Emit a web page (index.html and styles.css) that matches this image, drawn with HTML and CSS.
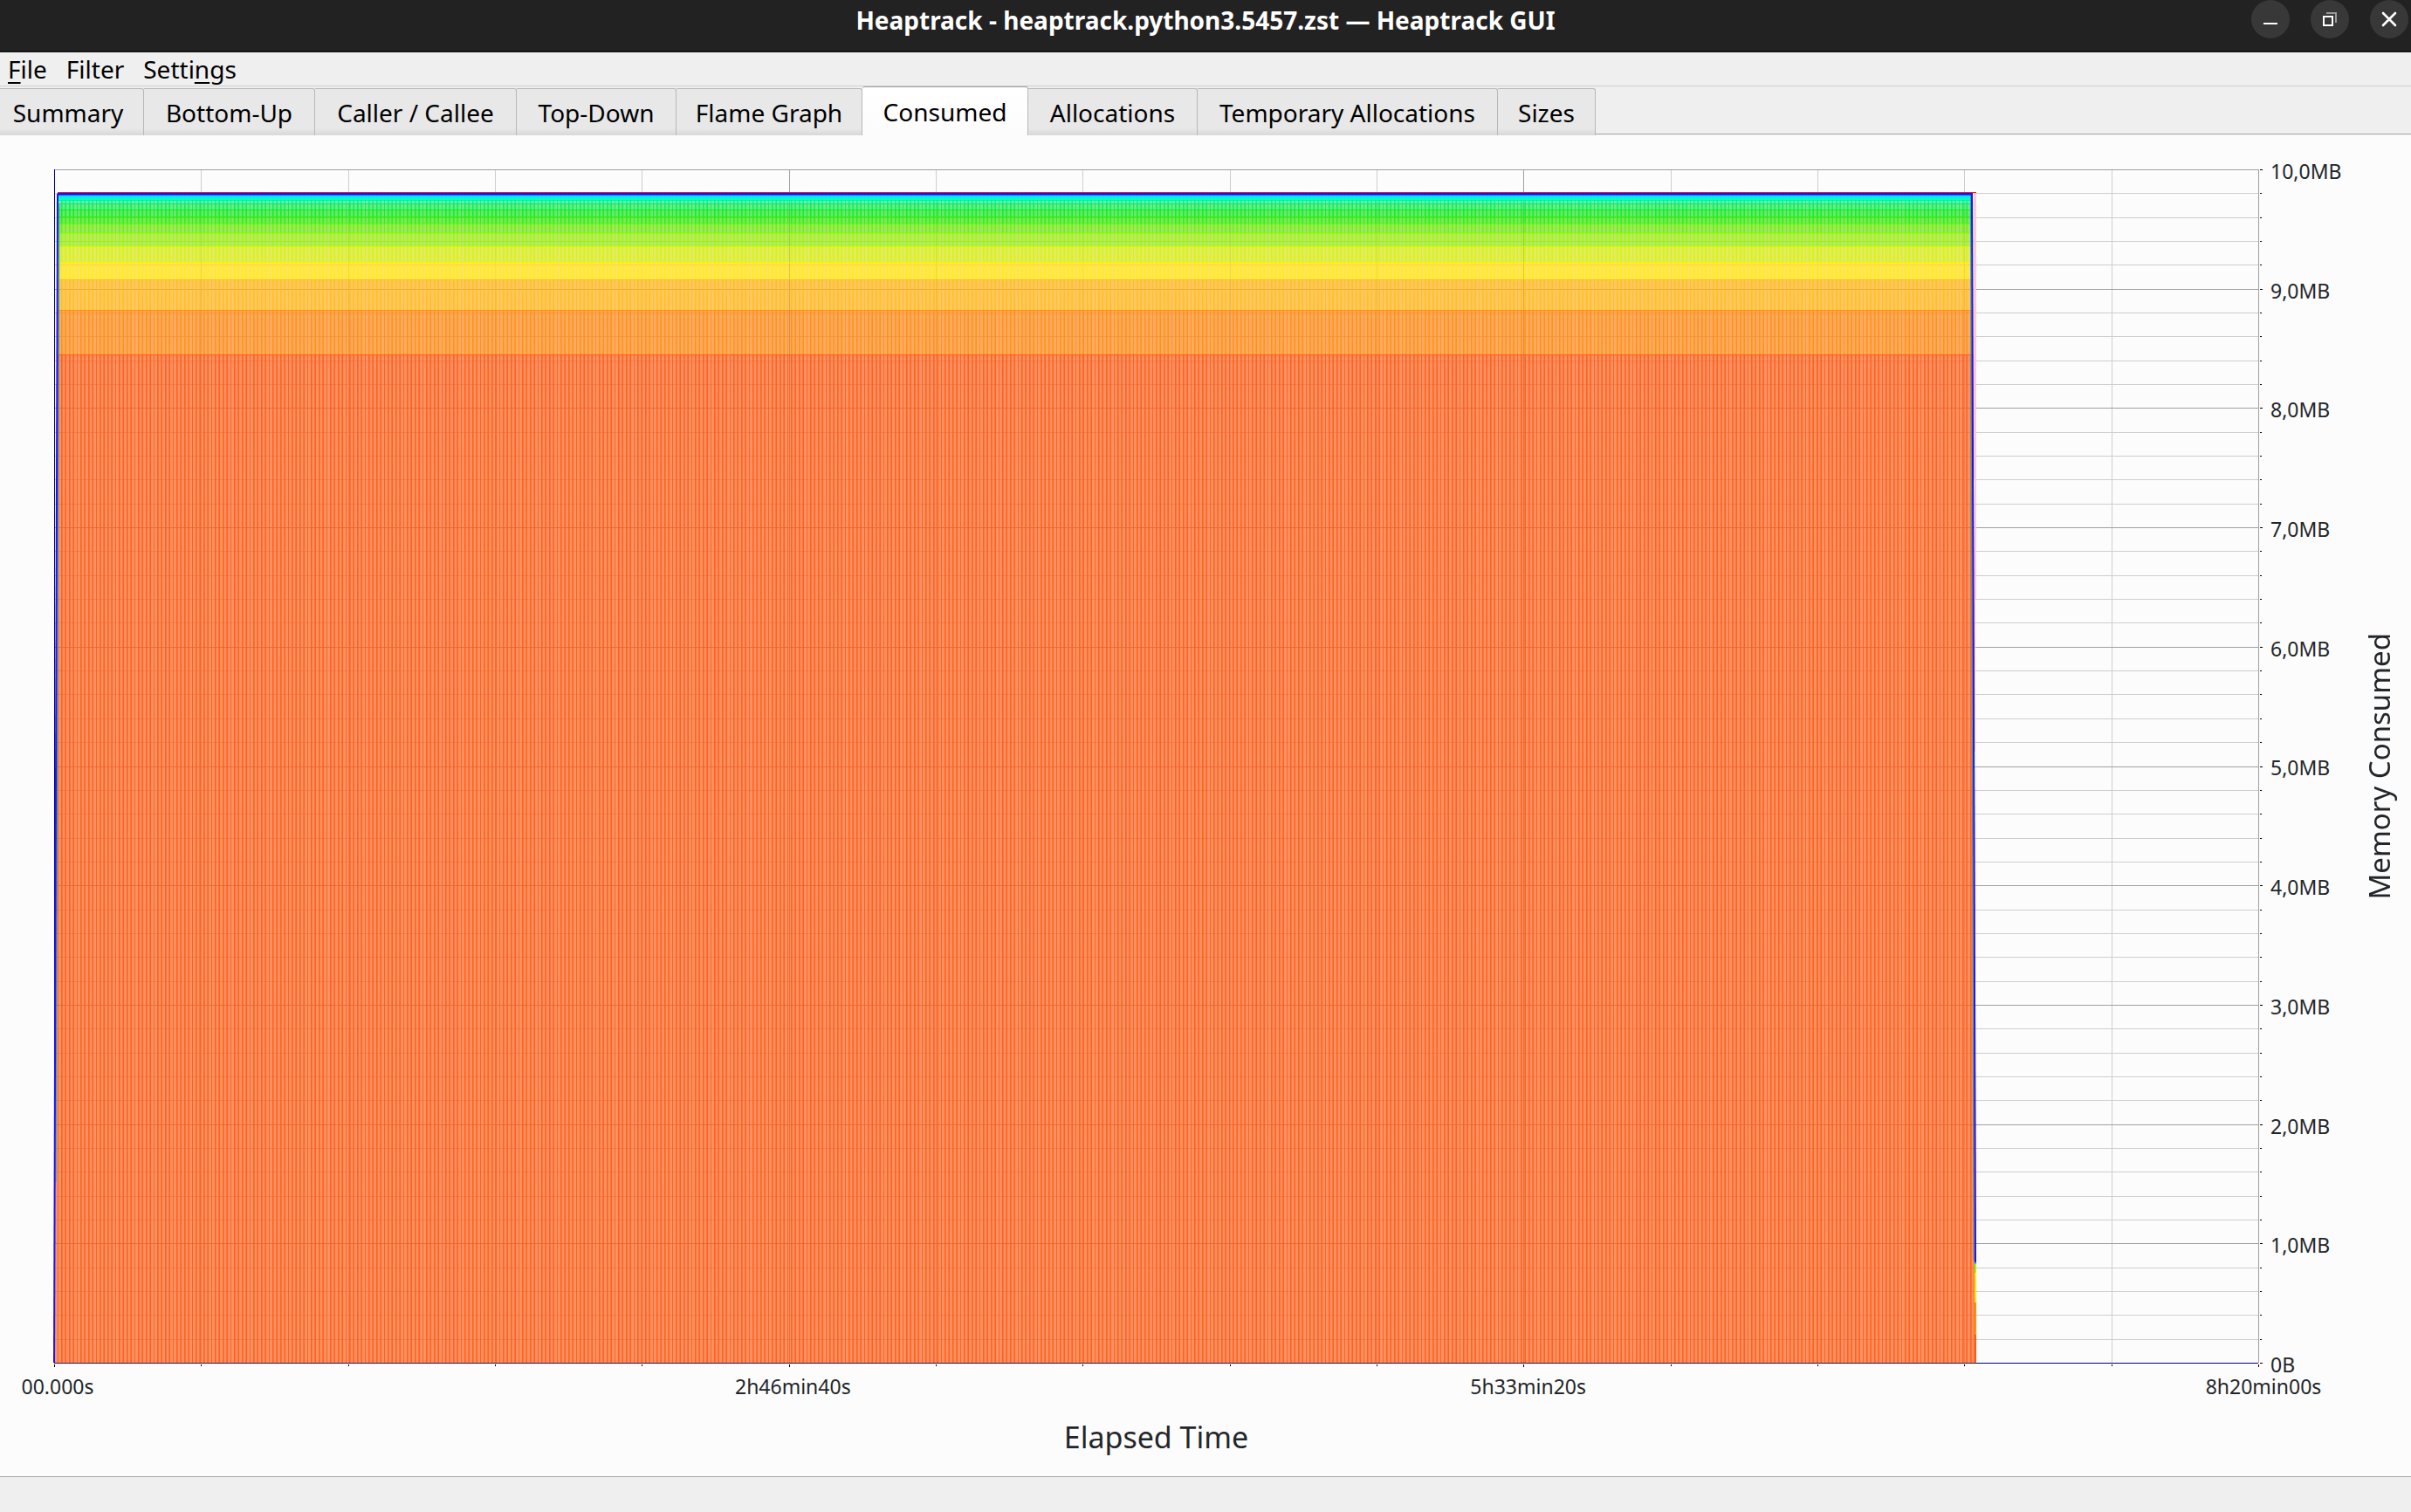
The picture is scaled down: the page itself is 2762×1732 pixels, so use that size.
FILE: index.html
```html
<!DOCTYPE html>
<html lang="en">
<head>
<meta charset="utf-8">
<title>Heaptrack - heaptrack.python3.5457.zst — Heaptrack GUI</title>
<link rel="stylesheet" href="styles.css">
</head>
<body>
<header class="titlebar">
  <h1 class="title">Heaptrack - heaptrack.python3.5457.zst — Heaptrack GUI</h1>
  <div class="window-buttons">
    <button class="window-button" type="button" aria-label="Minimize">
      <svg viewBox="0 0 44 44"><path d="M14 27h16" stroke="#fff" stroke-width="2"/></svg>
    </button>
    <button class="window-button" type="button" aria-label="Restore">
      <svg viewBox="0 0 44 44" fill="none" stroke-width="2"><path d="M18 15h11v11" stroke="#999"/><path d="M15 19h10v10h-10z" stroke="#fff"/></svg>
    </button>
    <button class="window-button" type="button" aria-label="Close">
      <svg viewBox="0 0 44 44"><path d="M15 15l14 14M29 15l-14 14" stroke="#fff" stroke-width="2.6" stroke-linecap="round"/></svg>
    </button>
  </div>
</header>
<nav class="menubar">
  <button class="menu" type="button"><u>F</u>ile</button>
  <button class="menu" type="button">Filter</button>
  <button class="menu" type="button">Setti<u>n</u>gs</button>
</nav>
<div class="tabs" role="tablist">
  <button class="tab tab-first" type="button" role="tab">Summary</button>
  <button class="tab" type="button" role="tab">Bottom-Up</button>
  <button class="tab" type="button" role="tab">Caller / Callee</button>
  <button class="tab" type="button" role="tab">Top-Down</button>
  <button class="tab" type="button" role="tab">Flame Graph</button>
  <button class="tab tab-active" type="button" role="tab" aria-selected="true">Consumed</button>
  <button class="tab" type="button" role="tab">Allocations</button>
  <button class="tab" type="button" role="tab">Temporary Allocations</button>
  <button class="tab" type="button" role="tab">Sizes</button>
</div>
<main class="pane">
  <svg class="plot" id="plot" viewBox="0 0 2525 1367" preserveAspectRatio="none" shape-rendering="crispEdges" role="img" aria-label="Memory consumed over elapsed time">
    <defs>
      <pattern id="stripes" width="22" height="40" patternUnits="userSpaceOnUse" x="4">
        <g fill="#fff">
          <rect x="0" width="1" height="40"/>
          <rect x="4" width="1" height="40"/>
          <rect x="9" width="1" height="40"/>
          <rect x="13" width="1" height="40"/>
          <rect x="18" width="1" height="40"/>
        </g>
        <g fill="#a0a0a0">
          <rect x="5" width="1" height="40"/>
          <rect x="8" width="1" height="40"/>
          <rect x="14" width="1" height="40"/>
          <rect x="17" width="1" height="40"/>
        </g>
      </pattern>
      <mask id="stripe-mask" maskUnits="userSpaceOnUse" x="0" y="0" width="2525" height="1367">
        <rect width="2525" height="1367" fill="url(#stripes)"/>
      </mask>
      <clipPath id="area"><path d="M4 26H2198L2202 1367H0z"/></clipPath>
    </defs>
    <g id="grid"></g>
    <g clip-path="url(#area)">
      <g id="bands"></g>
      <g id="band-stripes" mask="url(#stripe-mask)"></g>
      <g id="band-lines"></g>
    </g>
    <path d="M2199 27h3v300l-1 340h-1z" fill="#ffcaca"/>
    <path d="M0 0h1v1367h-1z" fill="#000080"/>
    <g fill="none" shape-rendering="auto">
      <path d="M6 40L2 1160" stroke="#2fae8a" stroke-width="1"/>
      <path d="M4 28L0 1367" stroke="#1414ff" stroke-width="2"/>
      <path d="M2195.500 30L2199 1250" stroke="#2f9e9a" stroke-width="1"/>
      <path d="M2197 28L2201 1252" stroke="#1414ff" stroke-width="2"/>
    </g>
    <path d="M2200 1252h2v2h-2z" fill="#00d0e0"/>
    <path d="M2200 1254h2v10h-2z" fill="#90ff00"/>
    <path d="M2200 1264h2v34h-2z" fill="#fff000"/>
    <path d="M2200 1298h2v37h-2z" fill="#ff9000"/>
    <path d="M2200 1335h2v32h-2z" fill="#ff5a14"/>
    <path d="M4 26h2198v1h-2198z" fill="#ff1e10"/>
    <path d="M4 27h2194v2h-2194z" fill="#1010ff"/>
    <path d="M0 1367h2202v1h-2202z" fill="#4a0a48"/>
    <path d="M2202 1367h323v1h-323z" fill="#000080"/>
    <g id="ticks"></g>
  </svg>
  <div class="y-axis">
    <ol class="y-labels">
      <li>10,0MB</li><li>9,0MB</li><li>8,0MB</li><li>7,0MB</li><li>6,0MB</li><li>5,0MB</li><li>4,0MB</li><li>3,0MB</li><li>2,0MB</li><li>1,0MB</li><li>0B</li>
    </ol>
    <div class="y-title">Memory Consumed</div>
  </div>
  <div class="x-axis">
    <ol class="x-labels">
      <li>00.000s</li><li>2h46min40s</li><li>5h33min20s</li><li>8h20min00s</li>
    </ol>
    <div class="x-title">Elapsed Time</div>
  </div>
</main>
<footer class="statusbar"></footer>
<script src="chart.js"></script>
</body>
</html>
```
FILE: styles.css
```css
* {
  box-sizing: border-box;
}

body {
  margin: 0;
  min-height: 100vh;
  display: flex;
  flex-direction: column;
  overflow-x: hidden;
  background: #efefef;
  color: #000;
  font-family: "Noto Sans", sans-serif;
  font-size: 28px;
}

button {
  margin: 0;
  padding: 0;
  border: 0;
  background: none;
  color: inherit;
  font: inherit;
}

ol {
  margin: 0;
  padding: 0;
  list-style: none;
}

.titlebar {
  display: grid;
  grid-template-columns: 1fr auto 1fr;
  height: 60px;
  background: #222;
  border-bottom: 2px solid #161616;
}

.title {
  grid-column: 2;
  margin: 0;
  color: #fff;
  font-size: 28px;
  line-height: 46px;
  font-weight: 700;
}

.window-buttons {
  display: flex;
  justify-content: flex-end;
  gap: 24px;
  padding-right: 3px;
}

.window-button {
  width: 44px;
  height: 44px;
  border-radius: 50%;
  background: #383838;
}

.window-button svg {
  display: block;
  width: 44px;
  height: 44px;
}

.menubar {
  display: flex;
  gap: 22px;
  height: 39px;
  padding-left: 9px;
  border-bottom: 1px solid #d0d0d0;
}

.menu {
  line-height: 38px;
}

.menu u {
  text-decoration-thickness: 2px;
  text-underline-offset: 4px;
}

.tabs {
  display: grid;
  grid-template-columns: 165px 196px 231px 183px 213px 190px 194px 344px 112px;
  height: 56px;
  align-items: end;
  background: linear-gradient(#aaa, #aaa) 0 54px / 100% 1px no-repeat;
}

.tab {
  height: 54px;
  border-top: 1px solid #b8b8b8;
  border-right: 1px solid #b8b8b8;
  border-top-right-radius: 3px;
  background: linear-gradient(#e8e8e8 85%, #d8d8d8);
  line-height: 52px;
  white-space: nowrap;
}

.tab-first {
  padding-right: 8px;
}

.tab-active {
  height: 56px;
  border-top-color: #a0a0a0;
  border-top-left-radius: 3px;
  background: linear-gradient(#fff, #fcfcfc);
}

.pane {
  flex: 1;
  display: grid;
  grid-template-columns: 1fr 175px;
  grid-template-rows: 1fr 130px;
  padding: 39px 0 0 62px;
  background: #fcfcfc;
  color: #232629;
}

.plot {
  width: 100%;
  height: 100%;
  min-height: 0;
  overflow: visible;
}

.y-axis {
  display: flex;
  justify-content: space-between;
  align-items: center;
  padding: 0 12px 0 14px;
}

.y-labels {
  display: flex;
  flex-direction: column;
  justify-content: space-between;
  align-self: stretch;
  margin: -10px 0 -14px;
  font-size: 23px;
  line-height: 24px;
}

.x-labels {
  display: flex;
  justify-content: space-between;
  margin: 0 -80px 0 -70px;
  padding-top: 15px;
  font-size: 23px;
  line-height: 24px;
}

.x-labels li {
  width: 148px;
  text-align: center;
}

.y-title {
  font-size: 33px;
  line-height: 48px;
  white-space: nowrap;
  writing-mode: vertical-rl;
  transform: rotate(180deg);
}

.x-title {
  margin-top: 22px;
  font-size: 34px;
  line-height: 48px;
  text-align: center;
}

.statusbar {
  height: 41px;
  border-top: 1px solid #a8a8a8;
}
```
FILE: chart.js
```js
const NS = "http://www.w3.org/2000/svg";
const WIDTH = 2525;
const HEIGHT = 1367;

function rect(parent, x, y, width, height, fill, opacity) {
  const el = document.createElementNS(NS, "rect");
  const attrs = { x, y, width, height, fill, "fill-opacity": opacity };
  for (const [name, value] of Object.entries(attrs)) {
    el.setAttribute(name, value);
  }
  document.getElementById(parent).appendChild(el);
}

// Minor lines first, so that the major ones stay on top.
for (const major of [false, true]) {
  const color = major ? "#a0a0a0" : "#cecece";
  for (let i = 0; i <= 50; i++) {
    if ((i % 5 === 0) !== major) continue;
    const y = Math.round(HEIGHT * i / 50);
    rect("grid", 0, y, WIDTH, 1, color, 1);
    rect("ticks", WIDTH + 2, y, major ? 3 : 2, 1, "#000", 1);
  }
  for (let i = 0; i <= 15; i++) {
    if ((i % 5 === 0) !== major) continue;
    const x = Math.round(WIDTH * i / 15);
    rect("grid", x, 0, 1, HEIGHT, color, 1);
    rect("ticks", x, HEIGHT + 2, 1, major ? 3 : 2, "#000", 1);
  }
}

// Stacked allocations, top to bottom: upper edge, line colour, fill colour.
const bands = [
  [27, "#0060ff", "#0060ff"],
  [30, "#00e8ff", "#00e8ff"],
  [33, "#00ffc0", "#00ffc0"],
  [35, "#00f090", "#20e890"],
  [39, "#00f050", "#20e050"],
  [46, "#00f418", "#20dc20"],
  [54, "#22f400", "#38dc10"],
  [62, "#60f400", "#70dc10"],
  [73, "#98fa00", "#98e010"],
  [88, "#d0f800", "#d8e010"],
  [106, "#fff000", "#ffd810"],
  [126, "#ffc010", "#ffac14"],
  [161, "#ff9008", "#ff8014"],
  [212, "#ff5a10", "#ff5a14"]
];

bands.forEach(([top, line, fill], i) => {
  const bottom = i + 1 < bands.length ? bands[i + 1][0] : HEIGHT;
  rect("bands", 0, top, WIDTH, bottom - top, fill, i < 3 ? 0.95 : 0.66);
  rect("band-stripes", 0, top, WIDTH, bottom - top, line, 0.85);
  rect("band-lines", 0, top, WIDTH, 1, line, 0.9);
});
```
